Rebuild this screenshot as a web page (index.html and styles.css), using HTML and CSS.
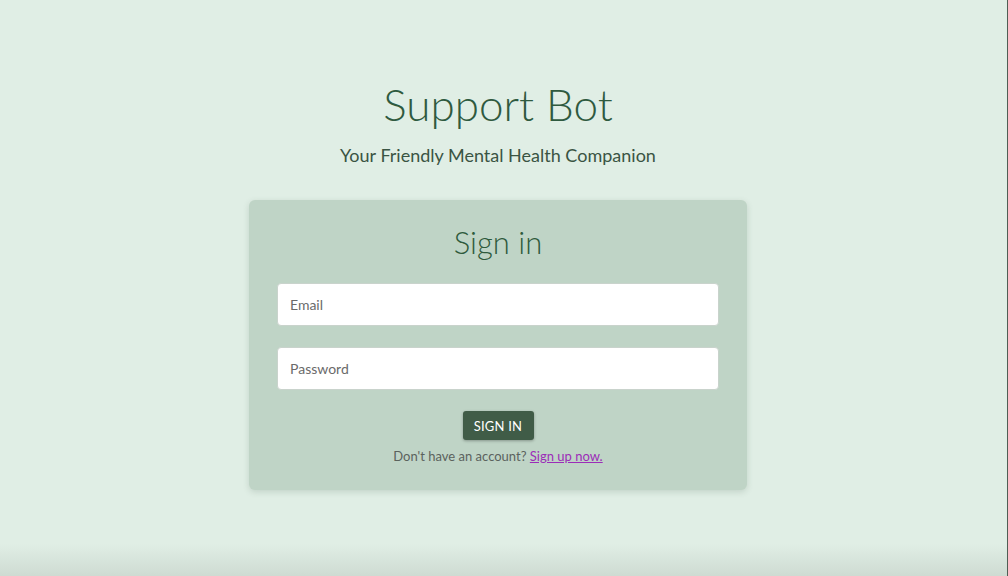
FILE: index.html
```html
<!DOCTYPE html>
<html lang="en">
<head>
<meta charset="utf-8">
<title>Support Bot – Sign in</title>
<link rel="stylesheet" href="styles.css">
</head>
<body>
<div class="page">
  <header class="hero">
    <h1 class="hero-title">Support Bot</h1>
    <p class="hero-sub">Your Friendly Mental Health Companion</p>
  </header>
  <main class="card">
    <h2 class="card-title">Sign in</h2>
    <form class="form">
      <input class="field" type="email" placeholder="Email">
      <input class="field" type="password" placeholder="Password">
      <button class="btn" type="button">SIGN IN</button>
    </form>
    <p class="signup">Don't have an account? <a class="signup-link" href="#">Sign up now.</a></p>
  </main>
</div>
</body>
</html>
```
FILE: styles.css
```css
* { box-sizing: border-box; }
html, body { height: 100%; }
body {
  margin: 0;
  font-family: "Lato", "Open Sans", sans-serif;
  color: #335440;
  background: linear-gradient(to bottom, #e0eee5 0, #e0eee5 calc(100% - 32px), #cedbd2 100%);
  border-right: 1px solid #4f5e54;
  overflow: hidden;
}
.page {
  display: flex;
  flex-direction: column;
  align-items: center;
  padding: 79px 11px 0 0;
}
.hero { text-align: center; }
.hero-title {
  margin: 0;
  font-weight: 300;
  font-size: 44px;
  line-height: 50px;
  color: #2f5a3f;
}
.hero-sub {
  margin: 14px 0 0;
  font-size: 18px;
  line-height: 24px;
  color: #3a5443;
}
.card {
  margin-top: 33px;
  width: 498px;
  height: 290px;
  background: #bfd4c6;
  border-radius: 6px;
  box-shadow: 0 2px 6px rgba(60, 90, 70, 0.18);
  padding: 22px 28px 0;
  text-align: center;
}
.card-title {
  margin: 0;
  font-weight: 300;
  font-size: 31px;
  line-height: 40px;
  color: #2e5a3c;
}
.form {
  margin-top: 21px;
  display: flex;
  flex-direction: column;
  align-items: center;
  gap: 21px;
}
.field {
  width: 100%;
  height: 43px;
  border: 1px solid #c9d3cc;
  border-radius: 4px;
  background: #fff;
  padding: 0 12px;
  font-family: inherit;
  font-size: 14px;
  color: #333;
}
.field::placeholder { color: #6a6a6a; }
.btn {
  width: 71px;
  height: 29px;
  border: none;
  border-radius: 3px;
  background: #405c47;
  color: #fff;
  font-family: inherit;
  font-size: 13px;
  font-weight: 400;
  letter-spacing: 0.2px;
  box-shadow: 0 1px 3px rgba(0, 0, 0, 0.3);
}
.signup {
  margin: 8px 0 0;
  font-size: 13px;
  line-height: 16px;
  color: #5b625d;
}
.signup-link { color: #9c2cb8; }
```
